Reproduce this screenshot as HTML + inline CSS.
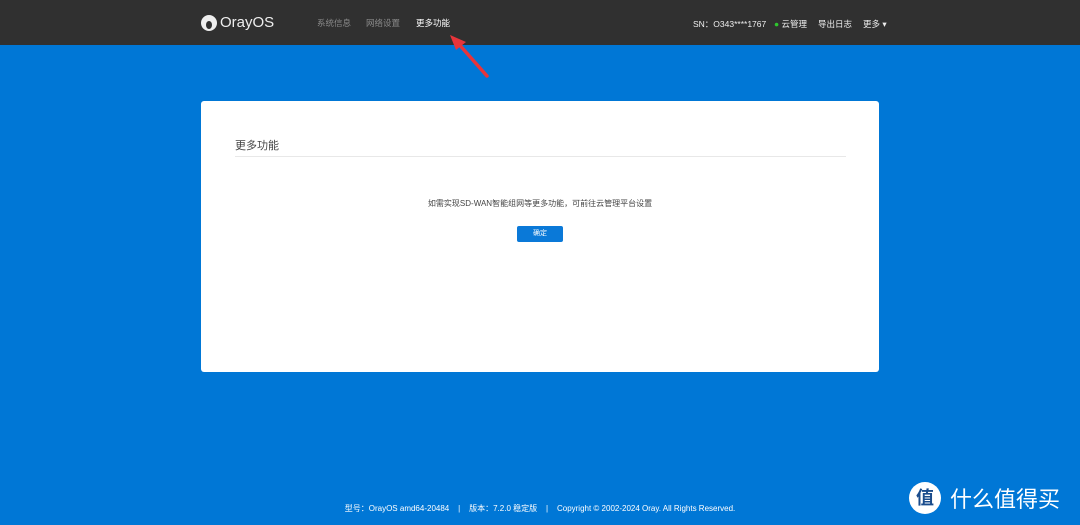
<!DOCTYPE html>
<html><head><meta charset="utf-8"><style>
*{margin:0;padding:0;box-sizing:border-box}
body{width:1080px;height:525px;overflow:hidden;background:#0077d6;font-family:"Liberation Sans","Noto Sans CJK SC",sans-serif;position:relative}
.hd{position:absolute;left:0;top:0;width:1080px;height:45px;background:#303030;color:#fff}
.logo{position:absolute;left:201px;top:14px;display:flex;align-items:center;font-size:15px;color:#eee}
.logo i{display:inline-block;width:16px;height:16px;border-radius:50%;background:#eee;margin-right:3px;position:relative}
.logo i:after{content:"";position:absolute;left:5px;top:6px;width:6px;height:8px;border-radius:50%;background:#303030}
.nav{position:absolute;top:17px;font-size:8.5px;color:#8a8a8a}
.r{position:absolute;top:18px;font-size:8.5px;color:#eee}
.card{position:absolute;left:201px;top:101px;width:678px;height:271px;background:#fff;border-radius:3px}
.t{position:absolute;left:34px;top:36px;font-size:11px;color:#444}
.line{position:absolute;left:34px;top:55px;width:611px;height:1px;background:#e8e8e8}
.msg{position:absolute;left:0;width:678px;top:97px;text-align:center;font-size:8px;color:#444}
.btn{position:absolute;left:316px;top:125px;width:46px;height:16px;background:#0a79d8;border-radius:2px;color:#fff;font-size:7px;text-align:center;line-height:16px}
.ft{position:absolute;top:503px;left:0;width:1080px;text-align:center;font-size:8px;color:#fff}
.wm{position:absolute;left:909px;top:482px;color:#fff;font-size:22px;display:flex;align-items:center}
.wm b{display:inline-block;width:32px;height:32px;border-radius:50%;background:#fff;color:#1a4c8c;font-size:18px;text-align:center;line-height:32px;margin-right:9px}
</style></head><body>
<div class="hd">
<div class="logo"><i></i>OrayOS</div>
<div class="nav" style="left:317px">系统信息</div>
<div class="nav" style="left:366px">网络设置</div>
<div class="nav" style="left:416px;color:#fff">更多功能</div>
<div class="r" style="left:693px">SN：O343****1767</div>
<div class="r" style="left:774px"><span style="color:#2ec72e">●</span> 云管理</div>
<div class="r" style="left:818px">导出日志</div>
<div class="r" style="left:863px">更多 ▾</div>
</div>
<svg style="position:absolute;left:445px;top:33px" width="50" height="50"><line x1="42" y1="43" x2="12" y2="9" stroke="#e8343a" stroke-width="3.5" stroke-linecap="round"/><polygon points="5,2 21,9 11,17" fill="#e8343a"/></svg>
<div class="card">
<div class="t">更多功能</div><div class="line"></div>
<div class="msg">如需实现SD-WAN智能组网等更多功能，可前往云管理平台设置</div>
<div class="btn">确定</div>
</div>
<div class="ft">型号：OrayOS amd64-20484 &nbsp;&nbsp; | &nbsp;&nbsp; 版本：7.2.0 稳定版 &nbsp;&nbsp; | &nbsp;&nbsp; Copyright © 2002-2024 Oray. All Rights Reserved.</div>
<div class="wm"><b>值</b>什么值得买</div>
</body></html>
